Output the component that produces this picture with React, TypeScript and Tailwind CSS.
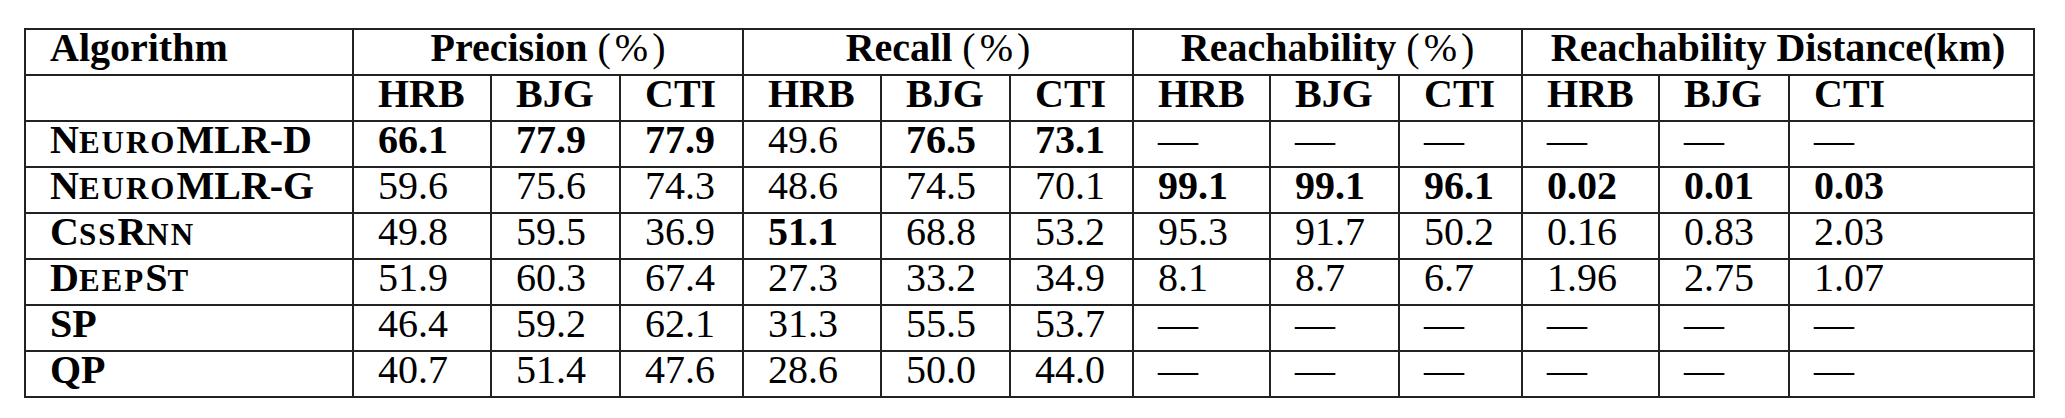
import React from "react";

type Cell = [string, boolean];
type Part = [string, boolean];

const rows: { name: Part[]; vals: Cell[] }[] = [
  {
    name: [["N", false], ["EURO", true], ["MLR-D", false]],
    vals: [
      ["66.1", true], ["77.9", true], ["77.9", true],
      ["49.6", false], ["76.5", true], ["73.1", true],
      ["—", false], ["—", false], ["—", false],
      ["—", false], ["—", false], ["—", false],
    ],
  },
  {
    name: [["N", false], ["EURO", true], ["MLR-G", false]],
    vals: [
      ["59.6", false], ["75.6", false], ["74.3", false],
      ["48.6", false], ["74.5", false], ["70.1", false],
      ["99.1", true], ["99.1", true], ["96.1", true],
      ["0.02", true], ["0.01", true], ["0.03", true],
    ],
  },
  {
    name: [["C", false], ["SS", true], ["R", false], ["NN", true]],
    vals: [
      ["49.8", false], ["59.5", false], ["36.9", false],
      ["51.1", true], ["68.8", false], ["53.2", false],
      ["95.3", false], ["91.7", false], ["50.2", false],
      ["0.16", false], ["0.83", false], ["2.03", false],
    ],
  },
  {
    name: [["D", false], ["EEP", true], ["S", false], ["T", true]],
    vals: [
      ["51.9", false], ["60.3", false], ["67.4", false],
      ["27.3", false], ["33.2", false], ["34.9", false],
      ["8.1", false], ["8.7", false], ["6.7", false],
      ["1.96", false], ["2.75", false], ["1.07", false],
    ],
  },
  {
    name: [["SP", false]],
    vals: [
      ["46.4", false], ["59.2", false], ["62.1", false],
      ["31.3", false], ["55.5", false], ["53.7", false],
      ["—", false], ["—", false], ["—", false],
      ["—", false], ["—", false], ["—", false],
    ],
  },
  {
    name: [["QP", false]],
    vals: [
      ["40.7", false], ["51.4", false], ["47.6", false],
      ["28.6", false], ["50.0", false], ["44.0", false],
      ["—", false], ["—", false], ["—", false],
      ["—", false], ["—", false], ["—", false],
    ],
  },
];

const subs = ["HRB", "BJG", "CTI"];
const cell = "border-2 border-[#222] p-0 pl-[24px] align-top leading-[36px] h-[46px] text-left";
const group = "border-2 border-[#222] p-0 align-top leading-[36px] h-[46px] text-center font-bold";

// small caps drawn by hand, LaTeX's \textsc is wider than the synthesized one
const Name = ({ parts }: { parts: Part[] }) => (
  <span className="font-bold">
    {parts.map(([t, small], i) =>
      small ? (
        <span key={i} className="text-[31px] tracking-[2px]">
          {t}
        </span>
      ) : (
        <span key={i}>{t}</span>
      )
    )}
  </span>
);

const Pct = () => (
  <span className="font-normal ml-[10px]">
    (<span className="mx-[4px]">%</span>)
  </span>
);

export default function App() {
  return (
    <div className="w-[2065px] h-[418px] bg-white font-['Liberation_Serif',serif] text-black text-[40px] pt-[28px] pl-[24px]">
      <table className="table-fixed border-collapse w-[2010px]">
        <colgroup>
          <col className="w-[328px]" />
          <col className="w-[138px]" />
          <col className="w-[129px]" />
          <col className="w-[123px]" />
          <col className="w-[138px]" />
          <col className="w-[129px]" />
          <col className="w-[123px]" />
          <col className="w-[137px]" />
          <col className="w-[129px]" />
          <col className="w-[123px]" />
          <col className="w-[137px]" />
          <col className="w-[130px]" />
          <col className="w-[245px]" />
        </colgroup>
        <thead>
          <tr>
            <th className={`${cell} font-bold`}>Algorithm</th>
            <th colSpan={3} className={group}>
              Precision<Pct />
            </th>
            <th colSpan={3} className={group}>
              Recall<Pct />
            </th>
            <th colSpan={3} className={group}>
              Reachability<Pct />
            </th>
            <th colSpan={3} className={group}>
              Reachability Distance(km)
            </th>
          </tr>
          <tr>
            <th className={cell}></th>
            {[0, 1, 2, 3].flatMap((g) =>
              subs.map((s) => (
                <th key={`${g}-${s}`} className={`${cell} font-bold`}>
                  {s}
                </th>
              ))
            )}
          </tr>
        </thead>
        <tbody>
          {rows.map((r, ri) => (
            <tr key={ri}>
              <td className={cell}>
                <Name parts={r.name} />
              </td>
              {r.vals.map(([v, b], i) => (
                <td key={i} className={`${cell} ${b ? "font-bold" : "font-normal"}`}>
                  {v}
                </td>
              ))}
            </tr>
          ))}
        </tbody>
      </table>
    </div>
  );
}
